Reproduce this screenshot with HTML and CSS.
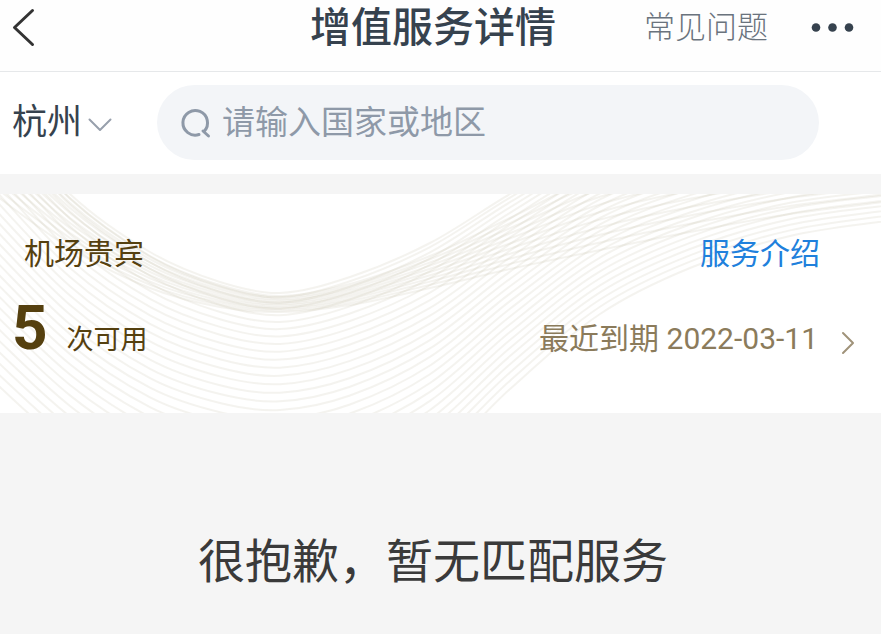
FILE: index.html
```html
<!DOCTYPE html>
<html lang="zh-CN">
  <head>
    <meta charset="UTF-8" />
    <meta name="viewport" content="width=device-width, initial-scale=1.0" />
    <title>增值服务详情</title>
    <link rel="stylesheet" href="styles.css" />
  </head>
  <body>
    <header class="navbar">
      <button class="icon-btn back-btn" type="button" aria-label="返回">
        <svg width="24" height="40" viewBox="0 0 24 40">
          <path d="M20.500 2.500L2.500 19.500L20.500 36.500" />
        </svg>
      </button>
      <h1>增值服务详情</h1>
      <div class="navbar-right">
        <a href="#faq">常见问题</a>
        <button class="icon-btn more-btn" type="button" aria-label="更多">
          <svg width="43" height="10" viewBox="0 0 43 10">
            <circle cx="5" cy="4.500" r="4.300" />
            <circle cx="21.500" cy="4.500" r="4.300" />
            <circle cx="38" cy="4.500" r="4.300" />
          </svg>
        </button>
      </div>
    </header>

    <form class="search-bar">
      <div class="city">
        <select name="city" aria-label="城市">
          <option>杭州</option>
        </select>
        <svg width="24" height="14" viewBox="0 0 24 14">
          <path d="M1.500 1.500L12 12L22.500 1.500" />
        </svg>
      </div>
      <label class="search-box">
        <svg width="32" height="32" viewBox="0 0 32 32">
          <path d="M19 27.500A12.300 12.300 0 1 1 24.200 24.200M23 24L28.500 29" />
        </svg>
        <input type="text" name="keyword" aria-label="搜索" placeholder="请输入国家或地区" />
      </label>
    </form>

    <main>
      <section class="card">
        <svg class="waves" id="waves" viewBox="0 0 881 219" preserveAspectRatio="none"></svg>
        <div class="card-row card-top">
          <h2>机场贵宾</h2>
          <a href="#intro">服务介绍</a>
        </div>
        <div class="card-row card-bottom">
          <p class="count"><strong>5</strong><span>次可用</span></p>
          <a class="expire" href="#records">
            <span>最近到期 2022-03-11</span>
            <svg width="14" height="24" viewBox="0 0 14 24">
              <path d="M2 2L12 12L2 22" />
            </svg>
          </a>
        </div>
      </section>
      <p class="empty">很抱歉，暂无匹配服务</p>
    </main>

    <script src="script.js"></script>
  </body>
</html>
```

FILE: styles.css
```css
* {
  box-sizing: border-box;
}
body {
  margin: 0;
  background-color: #f5f5f5;
  font-family: Roboto, "Noto Sans CJK SC", sans-serif;
}
h1,
h2,
p {
  margin: 0;
}
a {
  text-decoration: none;
}
svg {
  display: block;
  flex: none;
  fill: none;
  stroke-linecap: round;
  stroke-linejoin: round;
}
.icon-btn {
  padding: 0;
  border: none;
  background: none;
  cursor: pointer;
}

.navbar {
  display: grid;
  grid-template-columns: 1fr auto 1fr;
  align-items: center;
  padding: 0 27px 15px 12px;
  background-color: #fefefe;
  border-bottom: 1px solid #e6e8ea;
}
.navbar h1 {
  font-size: 41px;
  line-height: 56px;
  font-weight: 500;
  color: #36424e;
}
.navbar-right {
  display: flex;
  justify-content: flex-end;
  align-items: center;
  gap: 43px;
}
.navbar-right a {
  font-size: 31px;
  line-height: 56px;
  font-weight: 300;
  color: #6a737d;
}
.back-btn {
  justify-self: start;
}
.back-btn svg {
  stroke: #333;
  stroke-width: 3;
}
.more-btn svg {
  fill: #36424e;
}

.search-bar {
  display: flex;
  align-items: center;
  gap: 45px;
  padding: 13px 62px 14px 12px;
  background-color: #fff;
}
.city {
  position: relative;
}
.city select {
  appearance: none;
  display: block;
  width: 100px;
  padding: 0;
  border: none;
  background: none;
  font-family: inherit;
  font-size: 35px;
  line-height: 50px;
  color: #36424e;
}
.city svg {
  position: absolute;
  top: 20px;
  right: 0;
  stroke: #98a0ac;
  stroke-width: 2;
  pointer-events: none;
}
.search-box {
  flex: 1;
  display: flex;
  align-items: center;
  gap: 10px;
  height: 75px;
  padding: 0 23px;
  border-radius: 38px;
  background-color: #f3f5f8;
}
.search-box svg {
  stroke: #8e99a8;
  stroke-width: 3;
}
.search-box input {
  flex: 1;
  min-width: 0;
  padding: 0;
  border: none;
  outline: none;
  background: none;
  font-family: inherit;
  font-size: 33px;
  line-height: 50px;
  color: #36424e;
}
.search-box input::placeholder {
  color: #8e99a8;
}

.card {
  position: relative;
  margin-top: 20px;
  padding: 37px 26px 42px 12px;
  background-color: #fff;
}
.waves {
  position: absolute;
  top: 0;
  left: 0;
  width: 100%;
  height: 100%;
  overflow: hidden;
  stroke: rgba(190, 184, 160, 0.17);
  stroke-width: 2;
}
.card-row {
  position: relative;
  display: flex;
  justify-content: space-between;
}
.card-top {
  padding: 0 35px 0 12px;
  font-size: 30px;
  line-height: 46px;
}
.card-top h2 {
  font-size: 30px;
  font-weight: 400;
  color: #55400f;
}
.card-top a {
  color: #2080dc;
}
.card-bottom {
  align-items: baseline;
  margin-top: 20px;
  line-height: 62px;
}
.count {
  display: flex;
  align-items: baseline;
  gap: 19px;
  color: #55400f;
}
.count strong {
  font-size: 62px;
  font-weight: 700;
}
.count span {
  font-size: 27px;
}
.expire {
  display: flex;
  align-items: center;
  gap: 23px;
  font-size: 30px;
  color: #8b7b5b;
}
.expire svg {
  margin-top: 8px;
  stroke: #a0937a;
  stroke-width: 2;
}

.empty {
  padding: 118px 27px 38px 12px;
  font-size: 47px;
  line-height: 62px;
  text-align: center;
  color: #3a3a3a;
}
```

FILE: script.js
```js
const svg = document.getElementById("waves");
const xs = [-20, 70, 150, 220, 280, 350, 430, 510, 600, 690, 790, 900];

// each group fans out from one edge line to the other
const groups = [
  {
    lines: 29,
    power: 1.2,
    from: [-100, 0, 58, 88, 99, 83, 49, 0, -50, -75, -90, -95],
    to: [175, 255, 305, 325, 328, 315, 272, 195, 120, 74, 42, 25],
  },
  {
    lines: 11,
    power: 1,
    from: [-10, 54, 94, 113, 118, 111, 94, 75, 56, 38, 20, 6],
    to: [-95, 4, 62, 91, 102, 90, 62, 24, -20, -45, -60, -70],
  },
];

function smoothPath(ys) {
  let d = `M${xs[0]} ${ys[0]}`;
  for (let i = 0; i < xs.length - 1; i++) {
    const slope = (a, b) => (ys[b] - ys[a]) / (xs[b] - xs[a]);
    const last = xs.length - 1;
    const m1 = slope(Math.max(i - 1, 0), i + 1);
    const m2 = slope(i, Math.min(i + 2, last));
    const step = (xs[i + 1] - xs[i]) / 3;
    d += `C${xs[i] + step} ${ys[i] + m1 * step} ${xs[i + 1] - step} ${
      ys[i + 1] - m2 * step
    } ${xs[i + 1]} ${ys[i + 1]}`;
  }
  return d;
}

groups.forEach((group) => {
  for (let n = 0; n < group.lines; n++) {
    const t = Math.pow(n / (group.lines - 1), group.power);
    const ys = group.from.map((y, i) => y + (group.to[i] - y) * t);
    const path = document.createElementNS("http://www.w3.org/2000/svg", "path");
    path.setAttribute("d", smoothPath(ys));
    svg.appendChild(path);
  }
});
```
